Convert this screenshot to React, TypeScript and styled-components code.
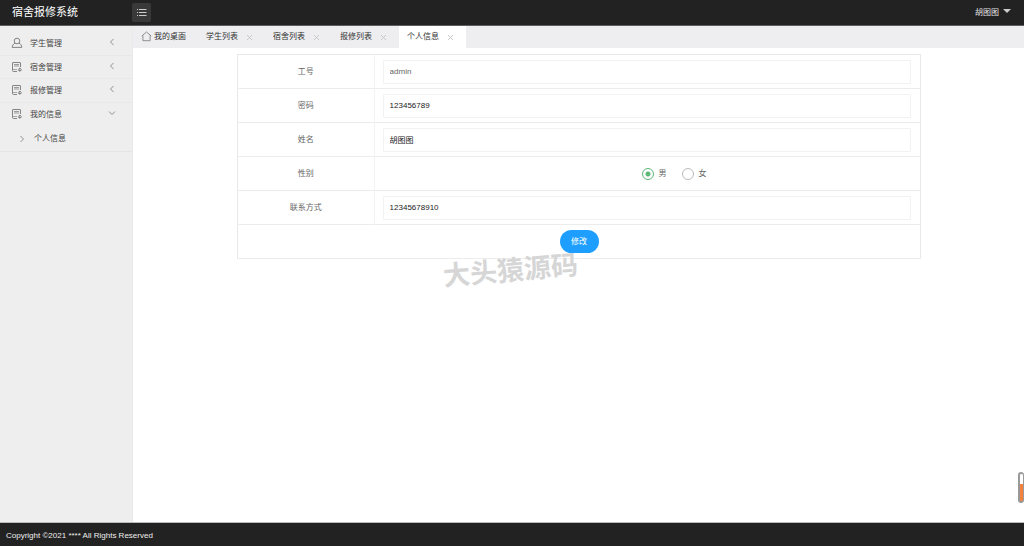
import React, { useState } from "react";
import styled, { createGlobalStyle } from "styled-components";

const GlobalStyle = createGlobalStyle`
  * { box-sizing: border-box; }
  body {
    margin: 0;
    background: #fff;
    color: #333;
    font: 8px/12px "Liberation Sans", "Noto Sans CJK SC", sans-serif;
  }
  button, input { font: inherit; color: inherit; }
  button { border: 0; padding: 0; background: none; cursor: pointer; }
  a { color: inherit; text-decoration: none; }
  ul { list-style: none; margin: 0; padding: 0; }
  svg { display: block; fill: none; stroke: currentColor; }
`;

const Page = styled.div`
  display: flex;
  flex-direction: column;
  min-height: 100vh;
`;

const Header = styled.header`
  display: flex;
  align-items: center;
  height: 26px;
  padding-right: 13px;
  background: #222;
  border-bottom: 1px solid #5c5c5c;
  color: #fff;
`;

const Brand = styled.h1`
  width: 132px;
  margin: 0;
  padding: 0 0 2px 12px;
  font-size: 11px;
  line-height: 22px;
  font-weight: 400;
`;

const MenuToggle = styled.button`
  display: grid;
  place-items: center;
  width: 19px;
  height: 19px;
  border-radius: 2px;
  background: #393939;
  color: #ccc;
`;

const UserMenu = styled.button`
  display: flex;
  align-items: center;
  gap: 4px;
  height: 24px;
  margin-left: auto;
  color: #e6e6e6;
`;

const Caret = styled.span`
  margin-bottom: 3px;
  border: 4px solid transparent;
  border-top-color: #ccc;
  border-bottom: 0;
`;

const Body = styled.div`
  display: flex;
  flex: 1;
`;

const Sidebar = styled.nav`
  flex: 0 0 133px;
  padding-top: 6px;
  background: #eee;
  border-right: 1px solid #eaeaea;
  color: #444;
`;

const NavList = styled.ul`
  display: flex;
  flex-direction: column;
  height: 94px;
`;

const NavItem = styled.li`
  display: flex;
  flex: 1;
  border-bottom: 1px solid #e8e8e8;
  &:last-child { border-bottom-color: transparent; }
`;

const NavLink = styled.a`
  display: flex;
  align-items: center;
  flex: 1;
  gap: 7px;
  padding: 2px 16px 0 11px;
  svg { margin-bottom: 2px; color: #777; }
  svg:last-child { margin: 0 0 4px auto; }
`;

const SubLink = styled.a`
  display: flex;
  align-items: center;
  gap: 8px;
  height: 26px;
  padding-left: 18px;
  border-bottom: 1px solid #e4e4e4;
  svg { color: #777; }
`;

const Main = styled.main`
  flex: 1;
  min-width: 0;
`;

const TabBar = styled.div`
  display: flex;
  height: 22px;
  background: #eeeef0;
`;

const HomeTab = styled.button`
  display: flex;
  align-items: center;
  gap: 2px;
  width: 65px;
  padding-left: 8px;
  svg { margin-bottom: 2px; color: #777; }
`;

const Tab = styled.div<{ $active: boolean }>`
  display: flex;
  align-items: center;
  justify-content: space-between;
  width: 67px;
  padding: 0 12px 0 8px;
  background: ${(p) => (p.$active ? "#fff" : "transparent")};
`;

const CloseButton = styled.button`
  color: #c4c4c4;
`;

const FormArea = styled.form`
  padding: 6px 103px 0 104px;
`;

const InfoTable = styled.table`
  width: 100%;
  table-layout: fixed;
  border-collapse: collapse;
  border: 1px solid #e8e8e8;
  color: #666;
`;

const Row = styled.tr`
  height: 34px;
  border-bottom: 1px solid #ececec;
`;

const LabelCell = styled.th`
  width: 20%;
  padding: 0;
  border-right: 1px solid #f2f2f2;
  font-weight: 400;
  text-align: center;
`;

const FieldCell = styled.td`
  padding: 0 9px 0 8px;
`;

const ActionCell = styled.td`
  padding: 0;
  text-align: center;
`;

const TextInput = styled.input`
  display: block;
  width: 100%;
  height: 24px;
  padding: 0 6px;
  border: 1px solid #f2f2f2;
  border-radius: 1px;
  background: #fff;
  color: #222;
  outline: 0;
  &:read-only { color: #666; }
`;

const RadioGroup = styled.div`
  display: flex;
  gap: 15px;
  padding-left: 49%;
`;

const RadioLabel = styled.label`
  display: flex;
  align-items: center;
  gap: 5px;
`;

const Radio = styled.input`
  appearance: none;
  width: 12px;
  height: 12px;
  margin: 0;
  border: 1px solid #bbb;
  border-radius: 50%;
  &:checked {
    border-color: #5fb878;
    background: radial-gradient(circle, #5fb878 2px, #fff 3px);
  }
`;

const SubmitButton = styled.button`
  width: 39px;
  height: 23px;
  border-radius: 12px;
  background: #1e9fff;
  color: #fff;
  vertical-align: middle;
`;

const Footer = styled.footer`
  height: 24px;
  padding: 0 6px;
  border-top: 1px solid #bbb;
  background: #222;
  color: #eee;
  line-height: 26px;
`;

const Watermark = styled.div`
  position: absolute;
  top: 254px;
  left: 443px;
  color: #d6d6d6;
  font-size: 27px;
  line-height: 34px;
  font-weight: 700;
  transform: rotate(-5deg);
  pointer-events: none;
`;

const Gauge = styled.div`
  position: fixed;
  right: 0;
  bottom: 43px;
  width: 6px;
  height: 31px;
  border: 2px solid #999;
  border-right-width: 1px;
  border-radius: 3px;
  background: linear-gradient(#fff 10px, #f5823c 10px);
`;

const UserIcon = () => (
  <svg width="12" height="12" viewBox="0 0 12 12" strokeWidth="0.9" aria-hidden="true">
    <circle cx="6" cy="4" r="2.8" />
    <path d="M4 6.2C2.2 7 1.3 8.4 1.2 10.4h9.6C10.7 8.4 9.8 7 8 6.2" />
  </svg>
);

const DocIcon = () => (
  <svg width="12" height="12" viewBox="0 0 12 12" strokeWidth="0.9" aria-hidden="true">
    <path d="M6 10.5H2.5a1 1 0 0 1-1-1V2a0.5 0.5 0 0 1 0.5-0.5h7a0.5 0.5 0 0 1 0.5 0.5V6" />
    <path d="M3 3.5h5M3 5h5" strokeWidth="0.7" />
    <path d="M1.5 8.5H6" strokeWidth="0.6" />
    <path d="M8.8 6.8v4M7 8.8l1.800-1.800 1.800 1.800M7.200 9.500h3.200" strokeWidth="0.8" />
  </svg>
);

const HomeIcon = () => (
  <svg width="11" height="11" viewBox="0 0 11 11" strokeWidth="0.8" aria-hidden="true">
    <path d="M0.8 5L5.5 1l4.700 4M1.900 4.500v5.200h7.200V4.500" />
  </svg>
);

const ListIcon = () => (
  <svg width="11" height="9" viewBox="0 0 11 9" strokeWidth="1" aria-hidden="true">
    <path d="M1 1.5h1M3 1.5h7.500M1 4.5h1M3 4.5h7.500M1 7.5h1M3 7.5h7.500" />
  </svg>
);

const chevrons = {
  left: "M5.5 1L2.5 4l3 3",
  right: "M2.5 1l3 3-3 3",
  down: "M1 2.5l3 3 3-3",
};

const Chevron = ({ to }: { to: keyof typeof chevrons }) => (
  <svg width="8" height="8" viewBox="0 0 8 8" strokeWidth="0.8" aria-hidden="true">
    <path d={chevrons[to]} />
  </svg>
);

const CloseIcon = () => (
  <svg width="7" height="7" viewBox="0 0 7 7" strokeWidth="0.9" aria-hidden="true">
    <path d="M1 1l5 5M6 1L1 6" />
  </svg>
);

const menu = ["学生管理", "宿舍管理", "报修管理", "我的信息"];
const tabs = ["学生列表", "宿舍列表", "报修列表", "个人信息"];

const TextRow = ({ id, label, value, readOnly }: { id: string; label: string; value: string; readOnly?: boolean }) => (
  <Row>
    <LabelCell scope="row"><label htmlFor={id}>{label}</label></LabelCell>
    <FieldCell><TextInput id={id} defaultValue={value} readOnly={readOnly} /></FieldCell>
  </Row>
);

export default function App() {
  const [gender, setGender] = useState("男");
  return (
    <Page>
      <GlobalStyle />
      <Header>
        <Brand>宿舍报修系统</Brand>
        <MenuToggle type="button" aria-label="菜单"><ListIcon /></MenuToggle>
        <UserMenu type="button">胡图图<Caret /></UserMenu>
      </Header>
      <Body>
        <Sidebar>
          <NavList>
            {menu.map((name, i) => (
              <NavItem key={name}>
                <NavLink href="#">
                  {i === 0 ? <UserIcon /> : <DocIcon />}
                  {name}
                  <Chevron to={i === 3 ? "down" : "left"} />
                </NavLink>
              </NavItem>
            ))}
          </NavList>
          <SubLink href="#"><Chevron to="right" />个人信息</SubLink>
        </Sidebar>
        <Main>
          <TabBar>
            <HomeTab type="button"><HomeIcon />我的桌面</HomeTab>
            {tabs.map((name) => (
              <Tab key={name} $active={name === "个人信息"}>
                <button type="button">{name}</button>
                <CloseButton type="button" aria-label="关闭"><CloseIcon /></CloseButton>
              </Tab>
            ))}
          </TabBar>
          <FormArea onSubmit={(e) => e.preventDefault()}>
            <InfoTable>
              <tbody>
                <TextRow id="account" label="工号" value="admin" readOnly />
                <TextRow id="password" label="密码" value="123456789" />
                <TextRow id="name" label="姓名" value="胡图图" />
                <Row>
                  <LabelCell scope="row">性别</LabelCell>
                  <FieldCell>
                    <RadioGroup role="radiogroup" aria-label="性别">
                      {["男", "女"].map((option) => (
                        <RadioLabel key={option}>
                          <Radio
                            type="radio"
                            name="gender"
                            checked={gender === option}
                            onChange={() => setGender(option)}
                          />
                          {option}
                        </RadioLabel>
                      ))}
                    </RadioGroup>
                  </FieldCell>
                </Row>
                <TextRow id="phone" label="联系方式" value="12345678910" />
                <Row>
                  <ActionCell colSpan={2}><SubmitButton type="submit">修改</SubmitButton></ActionCell>
                </Row>
              </tbody>
            </InfoTable>
          </FormArea>
        </Main>
      </Body>
      <Footer>Copyright ©2021 **** All Rights Reserved</Footer>
      <Watermark>大头猿源码</Watermark>
      <Gauge />
    </Page>
  );
}
